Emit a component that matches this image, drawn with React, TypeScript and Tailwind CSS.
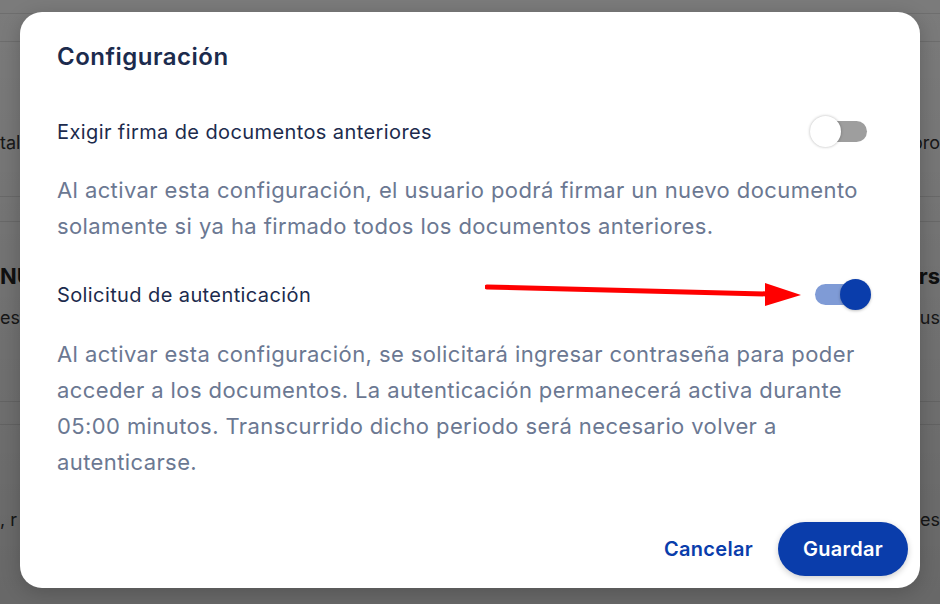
import { useState } from 'react';

function Toggle({ on, onChange }: { on: boolean; onChange: () => void }) {
  return (
    <button
      type="button"
      onClick={onChange}
      className="relative flex h-[31px] w-[61px] shrink-0 items-center"
    >
      <span
        className={`ml-[5px] block h-[21px] w-[52px] rounded-full ${on ? 'bg-[#7f9bd6]' : 'bg-[#9e9e9e]'}`}
      />
      <span
        className={`absolute top-0 h-[31px] w-[31px] rounded-full ${
          on ? 'right-0 bg-[#0a3dab] shadow-[0_1px_3px_rgba(0,0,0,0.25)]' : 'left-0 bg-white shadow-[0_0_3px_rgba(0,0,0,0.3)]'
        }`}
      />
    </button>
  );
}

function Arrow() {
  return (
    <svg width="320" height="26" viewBox="0 0 320 26" className="shrink-0">
      <path d="M2 5 L284 12" stroke="#ff0000" strokeWidth="5" strokeLinecap="round" />
      <polygon points="280,1 316,13 280,24" fill="#ff0000" />
    </svg>
  );
}

export default function App() {
  const [requireSign, setRequireSign] = useState(false);
  const [requireAuth, setRequireAuth] = useState(true);

  return (
    <div className="relative h-[604px] w-[940px] overflow-hidden bg-white font-['Inter',sans-serif]">
      {/* page behind the dialog */}
      <div className="flex h-full flex-col bg-[#f7f7f7] text-[#333]">
        <div className="h-[14px] border-b border-[#ddd]" />
        <div className="h-[28px] border-b border-[#ddd]" />
        <div className="flex h-[155px] items-center justify-between border-b border-[#ddd] pt-[46px] text-[18px]">
          <span>tal</span>
          <span>pro</span>
        </div>
        <div className="h-[25px] border-b border-[#ddd]" />
        <div className="flex h-[180px] flex-col gap-[16px] border-b border-[#ddd] pt-[40px] text-[18px]">
          <div className="flex justify-between text-[22px] leading-[28px] font-bold text-[#222]">
            <span>NU</span>
            <span>ers</span>
          </div>
          <div className="flex justify-between leading-[24px]">
            <span>est</span>
            <span>us</span>
          </div>
        </div>
        <div className="h-[23px] border-b border-[#ddd]" />
        <div className="flex justify-between pt-[83px] text-[18px] leading-[24px]">
          <span>, r</span>
          <span>es</span>
        </div>
      </div>

      {/* overlay */}
      <div className="absolute inset-0 bg-[linear-gradient(180deg,rgba(0,0,0,0.5),rgba(0,0,0,0.58))]">
        <div className="ml-[20px] mt-[12px] flex h-[576px] w-[900px] flex-col rounded-[22px] bg-white pb-[12px] pl-[37px] pr-[12px] shadow-[0_4px_20px_rgba(0,0,0,0.2)]">
          <h2 className="pt-[30px] text-[24px] font-semibold leading-[30px] tracking-[0.5px] text-[#1c2b4d]">
            Configuración
          </h2>

          <div className="mt-[44px] flex items-center justify-between pr-[37px]">
            <span className="text-[20px] leading-[24px] tracking-[0.4px] text-[#1c2b4d]">
              Exigir firma de documentos anteriores
            </span>
            <Toggle on={requireSign} onChange={() => setRequireSign(!requireSign)} />
          </div>
          <p className="mt-[25px] pr-[37px] text-[22px] leading-[36px] tracking-[0.4px] text-[#6b7892]">
            Al activar esta configuración, el usuario podrá firmar un nuevo documento solamente si ya ha firmado todos los documentos anteriores.
          </p>

          <div className="mt-[35px] flex items-center pr-[37px]">
            <span className="text-[20px] leading-[24px] tracking-[0.4px] text-[#1c2b4d]">Solicitud de autenticación</span>
            <div className="ml-auto mr-[5px]">
              <Arrow />
            </div>
            <Toggle on={requireAuth} onChange={() => setRequireAuth(!requireAuth)} />
          </div>
          <p className="mt-[26px] pr-[37px] text-[22px] leading-[36px] tracking-[0.4px] text-[#6b7892]">
            Al activar esta configuración, se solicitará ingresar contraseña para poder acceder a los documentos. La autenticación permanecerá activa durante 05:00 minutos. Transcurrido dicho periodo será necesario volver a autenticarse.
          </p>

          <div className="mt-auto flex items-center justify-end gap-[25px]">
            <button type="button" className="text-[20px] font-semibold tracking-[0.3px] text-[#0a3dab]">
              Cancelar
            </button>
            <button
              type="button"
              className="h-[54px] w-[130px] rounded-[27px] bg-[#0a3dab] text-[20px] font-semibold tracking-[0.3px] text-white shadow-[0_2px_6px_rgba(0,0,0,0.2)]"
            >
              Guardar
            </button>
          </div>
        </div>
      </div>
    </div>
  );
}
